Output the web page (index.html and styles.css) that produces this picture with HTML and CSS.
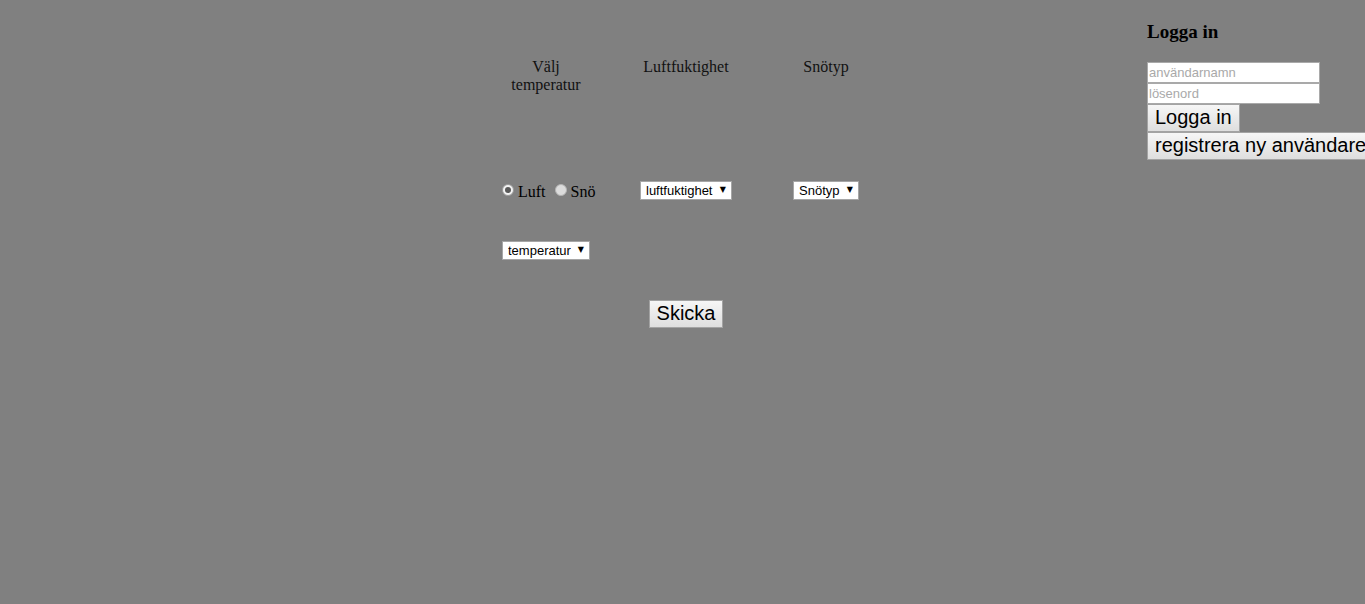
FILE: index.html
```html
<!DOCTYPE html>
<html lang="sv">
<head>
<meta charset="utf-8">
<title>Väder</title>
<link rel="stylesheet" href="styles.css">
</head>
<body>
<div class="page">
  <main class="main">
    <form class="choices">
      <div class="head">Välj temperatur</div>
      <div class="head">Luftfuktighet</div>
      <div class="head">Snötyp</div>

      <div class="cell radios">
        <label><input type="radio" name="typ" checked>Luft</label>
        <label><input type="radio" name="typ">Snö</label>
      </div>
      <div class="cell"><span class="sel"><select><option>luftfuktighet</option></select></span></div>
      <div class="cell"><span class="sel"><select><option>Snötyp</option></select></span></div>

      <div class="cell row3"><span class="sel"><select><option>temperatur</option></select></span></div>

      <div class="submit"><button type="button" class="btn">Skicka</button></div>
    </form>
  </main>
  <aside class="login">
    <h3 class="login-title">Logga in</h3>
    <input class="field" type="text" placeholder="användarnamn">
    <input class="field" type="password" placeholder="lösenord">
    <button type="button" class="btn">Logga in</button>
    <button type="button" class="btn nowrap">registrera ny användare</button>
  </aside>
</div>
</body>
</html>
```

FILE: styles.css
```css
html, body {
  margin: 0;
  padding: 0;
  background: #808080;
  height: 100%;
  overflow: hidden;
}
body {
  font-family: "Liberation Serif", "Times New Roman", serif;
  font-size: 16px;
  color: #000;
}
.page {
  display: flex;
  width: 1365px;
}
.main {
  width: 1147px;
  padding-left: 496px;
  padding-top: 58px;
  box-sizing: border-box;
}
.choices {
  display: grid;
  grid-template-columns: 100px 100px 100px;
  grid-template-rows: 122px 60px 20px;
  column-gap: 40px;
  width: 380px;
  align-items: start;
}
.head {
  text-align: center;
  line-height: 18px;
  color: #111;
}
.cell {
  display: flex;
  justify-content: center;
  height: 20px;
  align-items: flex-start;
}
.radios {
  justify-content: flex-start;
  padding-left: 6px;
  gap: 9px;
  line-height: 20px;
  font-size: 16px;
}
.radios label {
  display: flex;
  align-items: center;
  height: 21px;
  margin-top: 1px;
}
.radios input {
  appearance: none;
  -webkit-appearance: none;
  width: 12px;
  height: 12px;
  margin: -4px 4px 0 0;
  border-radius: 50%;
  border: 1px solid #b4b4b4;
  background: #dcdcdc;
  box-sizing: border-box;
  position: relative;
}
.radios input:checked {
  background: #f4f4f4;
  border-color: #9a9a9a;
}
.radios input:checked::after {
  content: "";
  position: absolute;
  left: 2px;
  top: 2px;
  width: 6px;
  height: 6px;
  border-radius: 50%;
  background: #5a5a5a;
}
.row3 {
  grid-column: 1;
  grid-row: 3;
}
.sel {
  position: relative;
  display: inline-block;
  margin-top: 1px;
}
.sel select {
  appearance: none;
  -webkit-appearance: none;
  font-family: "Liberation Sans", Arial, sans-serif;
  font-size: 13px;
  height: 19px;
  line-height: 15px;
  padding: 0 18px 0 5px;
  background: #fff;
  border: 1px solid #a6a6a6;
  border-radius: 0;
  color: #000;
}
.sel::after {
  content: "▼";
  position: absolute;
  right: 6px;
  top: 3px;
  font-size: 8px;
  line-height: 12px;
  font-family: "DejaVu Sans", sans-serif;
  pointer-events: none;
}
.submit {
  grid-column: 1 / 4;
  grid-row: 4;
  display: flex;
  justify-content: center;
  margin-top: 40px;
}
.btn {
  font-family: "Liberation Sans", Arial, sans-serif;
  font-size: 20px;
  line-height: 23px;
  padding: 1px 7px 2px;
  border: 1px solid #a3a3a3;
  background: linear-gradient(#f6f6f6, #dedede);
  color: #000;
  border-radius: 0;
  margin: 0;
}
.login {
  width: 218px;
  display: flex;
  flex-direction: column;
  align-items: flex-start;
  overflow: visible;
}
.login-title {
  font-size: 19px;
  font-weight: bold;
  margin: 21px 0 19px;
  line-height: 22px;
}
.field {
  width: 173px;
  height: 21px;
  box-sizing: border-box;
  border: 1px solid #a9a9a9;
  padding: 0 1px;
  font-family: "Liberation Sans", Arial, sans-serif;
  font-size: 13px;
  background: #fff;
  margin: 0;
}
.field::placeholder {
  color: #a9a9a9;
}
.nowrap {
  white-space: nowrap;
}
```
